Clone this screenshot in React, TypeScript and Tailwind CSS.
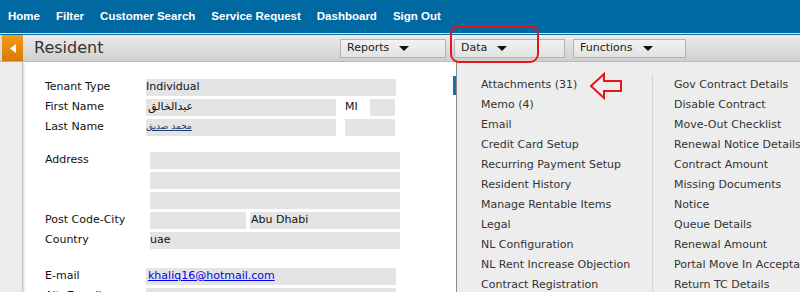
import React from "react";

const font = { fontFamily: '"DejaVu Sans", Verdana, sans-serif' };
const navFont = { fontFamily: '"Liberation Sans", Arial, sans-serif' };

function Caret() {
  return (
    <svg width="10" height="6" viewBox="0 0 10 6" className="ml-[10px]">
      <polygon points="0,0 10,0 5,5" fill="#111" />
    </svg>
  );
}

function DropBtn({ label, w }: { label: string; w: string }) {
  return (
    <div
      className={`${w} h-[19px] border border-[#b4b4b4] bg-gradient-to-b from-[#f2f2f2] to-[#e2e2e2] flex items-center pl-[6px] text-[11px] text-[#222]`}
    >
      <span>{label}</span>
      <Caret />
    </div>
  );
}

function Box({ w, children, className = "" }: { w: string; children?: React.ReactNode; className?: string }) {
  return (
    <div className={`${w} shrink-0 h-[17px] bg-[#e4e4e4] flex items-center text-[11px] text-[#111] ${className}`}>
      {children}
    </div>
  );
}

const col1 = [
  "Attachments (31)",
  "Memo (4)",
  "Email",
  "Credit Card Setup",
  "Recurring Payment Setup",
  "Resident History",
  "Manage Rentable Items",
  "Legal",
  "NL Configuration",
  "NL Rent Increase Objection",
  "Contract Registration",
];
const col2 = [
  "Gov Contract Details",
  "Disable Contract",
  "Move-Out Checklist",
  "Renewal Notice Details",
  "Contract Amount",
  "Missing Documents",
  "Notice",
  "Queue Details",
  "Renewal Amount",
  "Portal Move In Acceptance",
  "Return TC Details",
];

export default function App() {
  return (
    <div className="w-[800px] h-[292px] overflow-hidden relative bg-white" style={font}>
      {/* top nav */}
      <div
        className="h-[33px] bg-[#0169a2] flex items-center text-white font-bold text-[11.5px] pl-[8px] gap-[16px]"
        style={navFont}
      >
        <span>Home</span>
        <span>Filter</span>
        <span>Customer Search</span>
        <span>Service Request</span>
        <span>Dashboard</span>
        <span>Sign Out</span>
      </div>
      <div className="h-[1px] bg-[#cfe3ef]" />
      <div className="h-[1px] bg-[#0b6fa6]" />
      {/* header */}
      <div className="h-[27px] flex items-stretch bg-gradient-to-b from-[#ececec] to-[#cfcfcf] border-b border-[#bdbdbd]">
        <div className="w-[2px] bg-[#dcdcdc]" />
        <div className="w-[21px] bg-gradient-to-b from-[#f29b16] to-[#d97a05] flex items-center justify-center">
          <svg width="6" height="9" viewBox="0 0 6 9">
            <polygon points="6,0 6,9 0,4.5" fill="#fff" />
          </svg>
        </div>
        <div className="w-[11px]" />
        <div className="text-[16px] text-[#333] flex items-center w-[306px]">Resident</div>
        <div className="flex items-center gap-[8px] pt-[1px]">
          <DropBtn label="Reports" w="w-[106px]" />
          <DropBtn label="Data" w="w-[111px]" />
          <DropBtn label="Functions" w="w-[113px]" />
        </div>
      </div>
      {/* body */}
      <div className="flex h-[230px]">
        <div className="w-[23px] shrink-0 bg-[#ececec] border-r border-[#c8c8c8] shadow-[1px_0_2px_rgba(0,0,0,0.2)]" />
        <div className="w-[429px] shrink-0 text-[11px] text-[#111] pl-[20px] pt-[15px]">
          <div className="flex items-center h-[20px]">
            <div className="w-[103px] pl-[2px] shrink-0">Tenant Type</div>
            <Box w="w-[250px]">Individual</Box>
          </div>
          <div className="flex items-center h-[20px]">
            <div className="w-[103px] pl-[2px] shrink-0">First Name</div>
            <Box w="w-[190px]" className="pl-[2px]">
              <span dir="rtl">عبدالخالق</span>
            </Box>
            <div className="w-[34px] pl-[9px] shrink-0">MI</div>
            <Box w="w-[25px]" />
          </div>
          <div className="flex items-center h-[20px]">
            <div className="w-[103px] pl-[2px] shrink-0">Last Name</div>
            <Box w="w-[190px]">
              <span dir="rtl" className="underline text-[#1d3b6b] text-[9px]">محمد صديق</span>
            </Box>
            <div className="w-[9px] shrink-0" />
            <Box w="w-[50px]" />
          </div>
          <div className="flex h-[20px] mt-[13px] items-center">
            <div className="w-[107px] pl-[2px] shrink-0">Address</div>
            <Box w="w-[250px]" />
          </div>
          <div className="flex h-[20px] items-center">
            <div className="w-[107px] shrink-0" />
            <Box w="w-[250px]" />
          </div>
          <div className="flex h-[20px] items-center">
            <div className="w-[107px] shrink-0" />
            <Box w="w-[250px]" />
          </div>
          <div className="flex h-[20px] items-center">
            <div className="w-[107px] pl-[2px] shrink-0">Post Code-City</div>
            <Box w="w-[96px]" />
            <div className="w-[4px] shrink-0" />
            <Box w="w-[150px]" className="pl-[1px]">Abu Dhabi</Box>
          </div>
          <div className="flex h-[20px] items-center">
            <div className="w-[107px] pl-[2px] shrink-0">Country</div>
            <Box w="w-[250px]">uae</Box>
          </div>
          <div className="flex h-[20px] items-center mt-[16px]">
            <div className="w-[103px] pl-[2px] shrink-0">E-mail</div>
            <Box w="w-[250px]" className="pl-[2px]">
              <span className="text-[#0000ee] underline text-[11px]">khaliq16@hotmail.com</span>
            </Box>
          </div>
          <div className="flex h-[20px] items-center">
            <div className="w-[103px] pl-[2px] shrink-0">Alt. E-mail</div>
            <Box w="w-[250px]" />
          </div>
        </div>
        {/* scrollbar */}
        <div className="w-[4px] shrink-0 relative">
          <div className="absolute left-[1px] top-[14px] w-[3px] h-[19px] bg-[#1a6fa6]" />
        </div>
        <div className="w-[1px] shrink-0 bg-[#8a8a8a]" />
        {/* menu */}
        <div className="flex-1 min-w-0 overflow-hidden bg-[#ededed] flex pt-[13px] text-[11px] text-[#333]">
          <div className="w-[195px] shrink-0 pl-[24px]">
            {col1.map((t) => (
              <div key={t} className="h-[20px] flex items-center whitespace-nowrap">
                {t}
              </div>
            ))}
          </div>
          <div className="w-[1px] shrink-0 bg-[#d4d4d4] self-stretch" />
          <div className="pl-[21px] shrink-0">
            {col2.map((t) => (
              <div key={t} className="h-[20px] flex items-center whitespace-nowrap">
                {t}
              </div>
            ))}
          </div>
        </div>
      </div>
      {/* annotations */}
      <div className="absolute left-[450px] top-[25px] w-[89px] h-[38px] border-2 border-[#e8151b] rounded-[9px]" />
      <svg className="absolute left-[588px] top-[72px]" width="36" height="28" viewBox="0 0 36 28">
        <polygon
          points="3,14 16,2 16,9 33,9 33,19 16,19 16,26"
          fill="none"
          stroke="#e8151b"
          strokeWidth="2"
        />
      </svg>
    </div>
  );
}
